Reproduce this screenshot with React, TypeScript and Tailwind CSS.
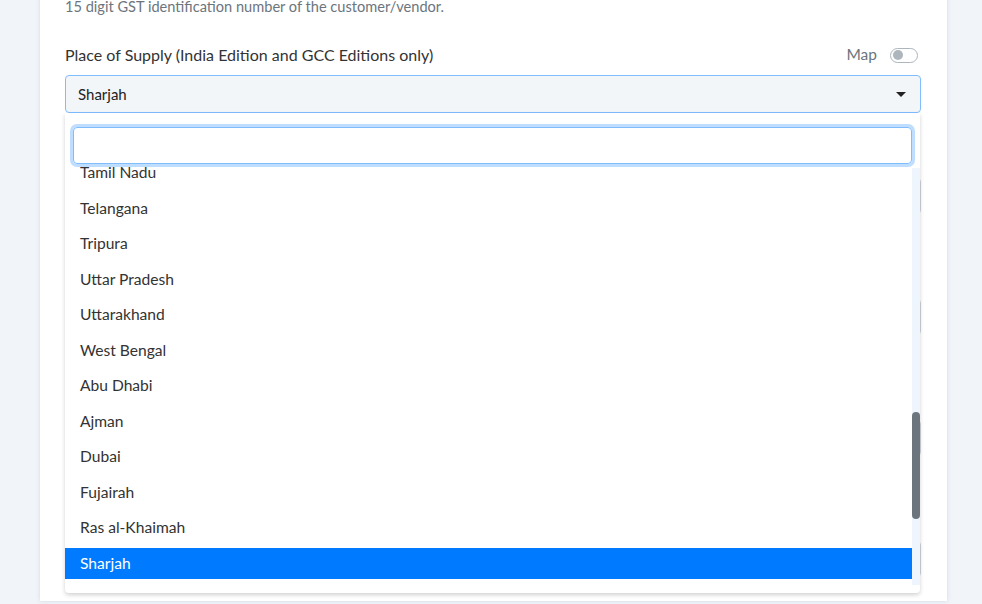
import { useState } from 'react';

const visibleOptions = [
  'Tamil Nadu',
  'Telangana',
  'Tripura',
  'Uttar Pradesh',
  'Uttarakhand',
  'West Bengal',
  'Abu Dhabi',
  'Ajman',
  'Dubai',
  'Fujairah',
  'Ras al-Khaimah',
  'Sharjah',
];

function Toggle({ on }: { on: boolean }) {
  return (
    <span
      className={`inline-flex items-center w-[28px] h-[15px] rounded-full border px-[2px] ${
        on ? 'bg-[#007bff] border-[#007bff] justify-end' : 'bg-white border-[#adb5bd] justify-start'
      }`}
    >
      <span className={`w-[10px] h-[10px] rounded-full ${on ? 'bg-white' : 'bg-[#adb5bd]'}`} />
    </span>
  );
}

function HiddenField() {
  return (
    <div className="mt-[35px] first:mt-[53px]">
      <div className="h-[22px] text-[15px] text-[#333]">&nbsp;</div>
      <div className="mt-[8px] h-[36px] rounded border border-[#ced4da] bg-white" />
      <div className="h-[20px]" />
    </div>
  );
}

export default function App() {
  const [selected] = useState('Sharjah');
  const [query, setQuery] = useState('');

  return (
    <div
      className="w-full h-[604px] overflow-hidden bg-[#f1f4f8]"
      style={{ fontFamily: 'Lato, "Open Sans", sans-serif' }}
    >
      <div className="ml-[40px] w-[907px] h-full bg-white shadow-[0_0_4px_rgba(120,140,190,0.25)] pl-[25px] pr-[26px]">
        <p className="-mt-[3px] h-[20px] leading-[20px] text-[14.6px] text-[#6c757d]">
          15 digit GST identification number of the customer/vendor.
        </p>

        <div className="mt-[27px] h-[22px] flex items-center justify-between">
          <label className="text-[16px] text-[#333]">Place of Supply (India Edition and GCC Editions only)</label>
          <div className="flex items-center gap-[13px] pr-[3px]">
            <span className="text-[15.5px] text-[#6c757d]">Map</span>
            <Toggle on={false} />
          </div>
        </div>

        <div className="relative mt-[9px]">
          <div className="h-[38px] flex items-center justify-between rounded border border-[#80bdff] bg-[#f3f6f9] pl-[12px] pr-[14px]">
            <span className="text-[15px] text-[#222]">{selected}</span>
            <span className="w-0 h-0 border-l-[5px] border-r-[5px] border-t-[5px] border-l-transparent border-r-transparent border-t-[#222]" />
          </div>

          <div className="absolute left-0 right-[1px] top-full z-10 h-[480px] bg-white rounded-b shadow-[0_2px_4px_rgba(0,0,0,0.18)] pt-[14px] pb-[8px] flex flex-col">
            <input
              value={query}
              onChange={(e) => setQuery(e.target.value)}
              className="mx-[8px] h-[37px] shrink-0 rounded border border-[#80bdff] outline-none px-[10px] text-[14px] shadow-[0_0_0_3px_rgba(0,123,255,0.25)]"
            />
            <div className="relative mt-[1px] flex-1 overflow-hidden">
              <ul className="-mt-[7.5px] pr-[8px] flex flex-col gap-[4.5px]">
                {visibleOptions.map((opt) => (
                  <li
                    key={opt}
                    className={`h-[31px] flex items-center pl-[15px] text-[15.6px] ${
                      opt === selected ? 'bg-[#007bff] text-white' : 'text-[#333]'
                    }`}
                  >
                    {opt}
                  </li>
                ))}
              </ul>
              {/* scrollbar track + thumb */}
              <div className="absolute right-0 top-[3px] bottom-0 w-[8px] bg-[#eef5fd]" />
              <div className="absolute right-0 top-[247px] w-[8px] h-[107px] rounded-full bg-[#6c757d]" />
            </div>
          </div>
        </div>

        <HiddenField />
        <HiddenField />
        <HiddenField />
        <HiddenField />
      </div>
    </div>
  );
}
